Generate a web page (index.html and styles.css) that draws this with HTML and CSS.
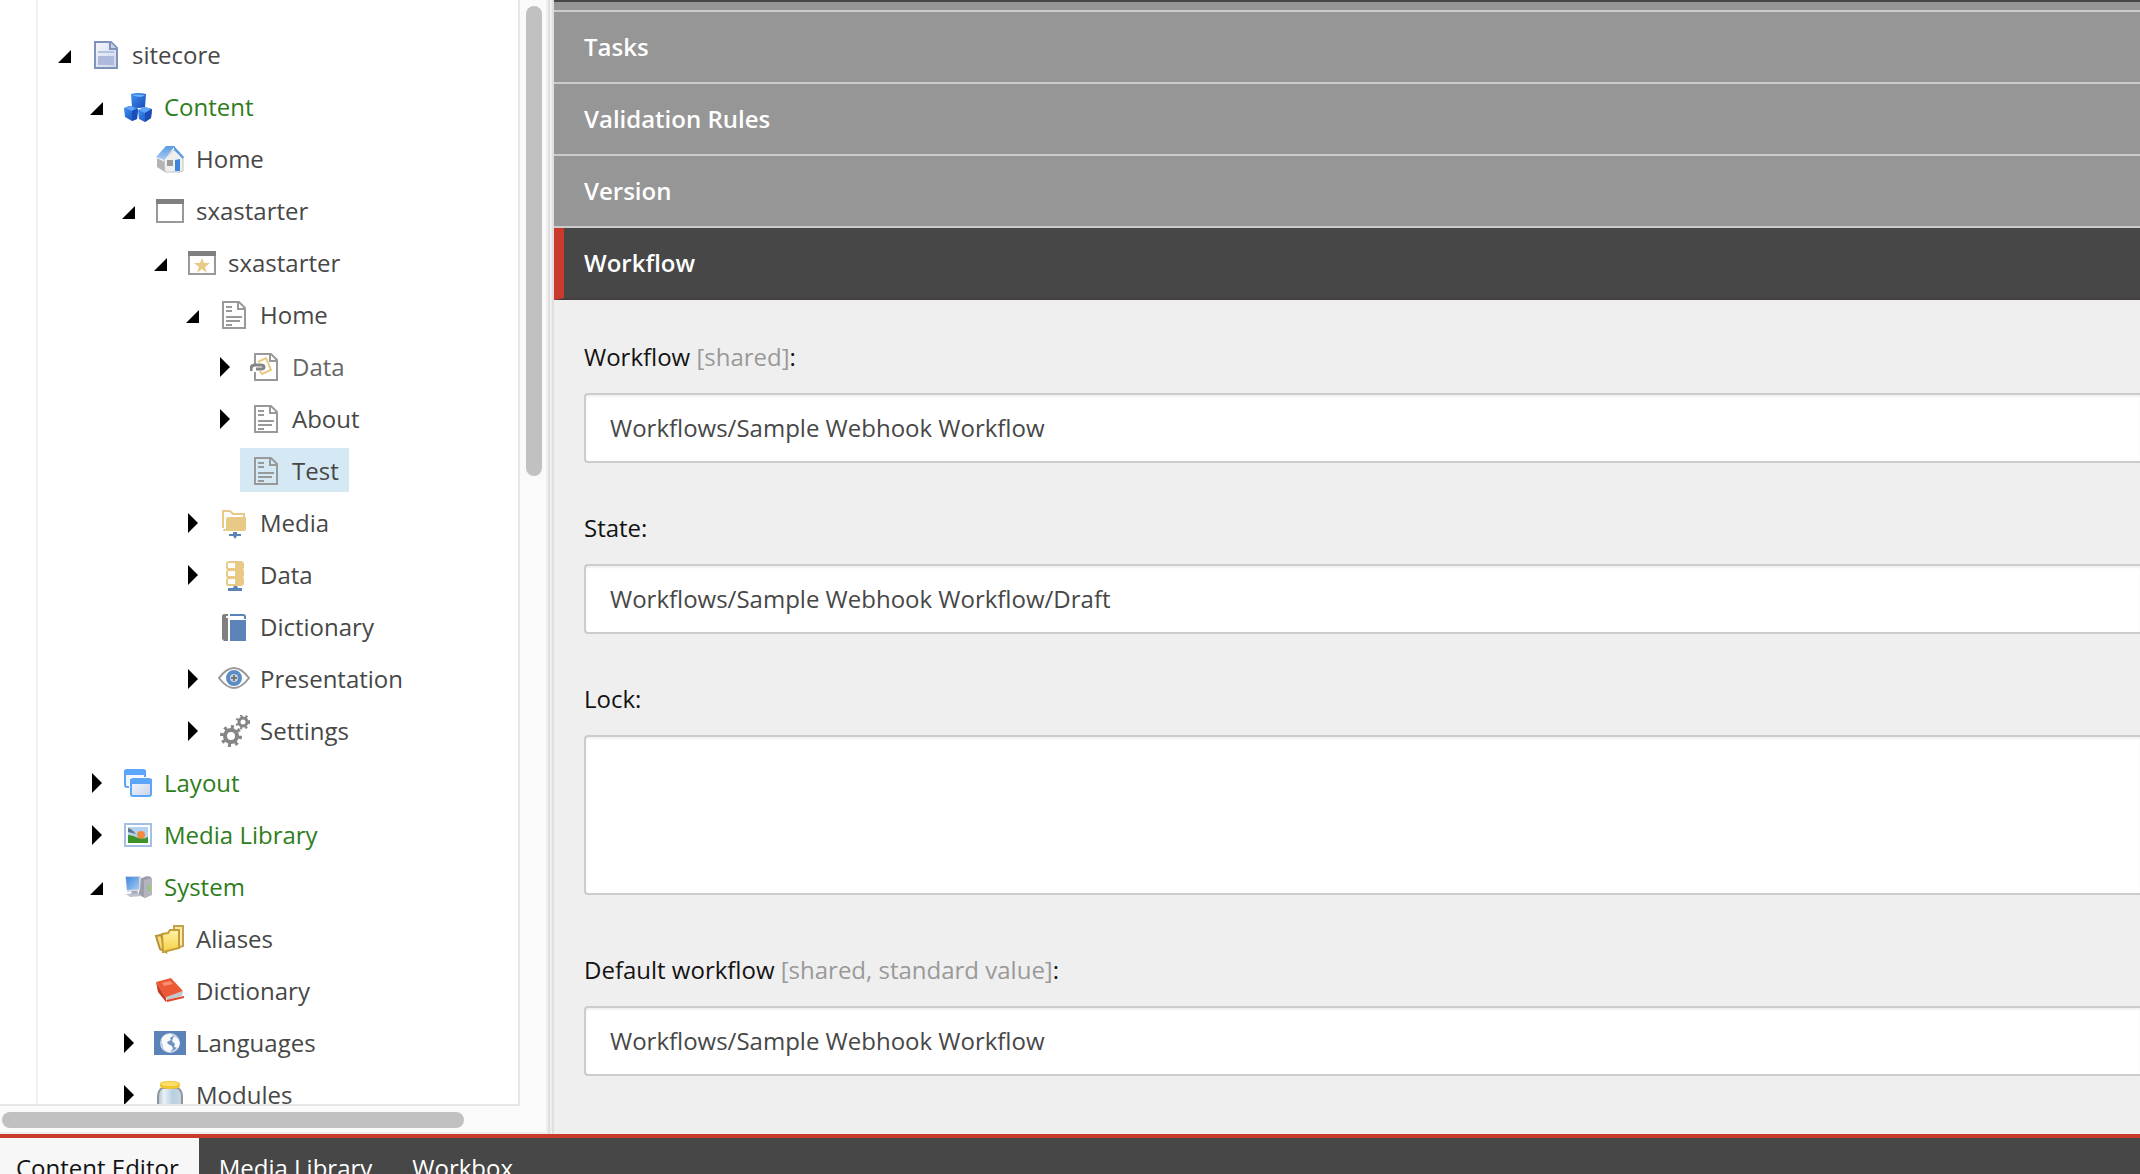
FILE: index.html
```
<!DOCTYPE html>
<html lang="en">
<head>
<meta charset="utf-8">
<title>Content Editor</title>
<link rel="stylesheet" href="styles.css">
</head>
<body>
<svg class="defs" aria-hidden="true">
  <defs>
    <linearGradient id="g-sheet" x1="0" y1="0" x2="1" y2="1"><stop offset="0" stop-color="#f4f7fd"/><stop offset="1" stop-color="#ccd4ea"/></linearGradient>
    <linearGradient id="g-cube" x1="0" y1="0" x2="1" y2="1"><stop offset="0" stop-color="#3f92f6"/><stop offset="1" stop-color="#1a4bb4"/></linearGradient>
    <linearGradient id="g-roof" x1="0" y1="0" x2="0" y2="1"><stop offset="0" stop-color="#5a9be0"/><stop offset="1" stop-color="#a9cdf3"/></linearGradient>
    <linearGradient id="g-folder" x1="0" y1="0" x2="0" y2="1"><stop offset="0" stop-color="#fff3a8"/><stop offset="1" stop-color="#f6cf45"/></linearGradient>
    <linearGradient id="g-screen" x1="0" y1="0" x2="1" y2="1"><stop offset="0" stop-color="#3f86dd"/><stop offset="1" stop-color="#a5cdf5"/></linearGradient>
    <linearGradient id="g-glass" x1="0" y1="0" x2="1" y2="0"><stop offset="0" stop-color="#b4bfc8"/><stop offset=".25" stop-color="#e9f2f9"/><stop offset=".6" stop-color="#b9cfe0"/><stop offset="1" stop-color="#ccd6de"/></linearGradient>
    <symbol id="open" viewBox="0 0 14 14"><path d="M14 1v13H1z"/></symbol>
    <symbol id="closed" viewBox="0 0 12 20"><path d="M2 0l10 10L2 20z"/></symbol>
    <symbol id="root" viewBox="0 0 32 32"><path d="M5 3h16l6 6v20H5z" fill="url(#g-sheet)" stroke="#7f93b8" stroke-width="2"/><path d="M20 3v7h7" fill="#c9d3e8" stroke="#7f93b8" stroke-width="2"/><path d="M8 13h16" stroke="#b3c1e0" stroke-width="2"/><path d="M8 17h16v9H8z" fill="#aebadb"/></symbol>
    <symbol id="cubes" viewBox="0 0 32 32"><path d="M9 3q7-2 15 0l-1 13q-6 2-13 0z" fill="url(#g-cube)"/><path d="M10 4q6-1 13 0l-4 2q-5 0-9-2" fill="#6fb0fb"/><path d="M2 17l5-2 8 1 1 3-1 9-5 2-7-4z" fill="url(#g-cube)"/><path d="M3 17l5-2 6 2-4 3z" fill="#5ea4fa"/><path d="M10 20v10l5-2 1-10z" fill="#1b4db6"/><path d="M16 19l7-3 7 2-1 9-6 4-6-3z" fill="url(#g-cube)"/><path d="M16 19l7-3 6 2-6 4z" fill="#5ea4fa"/><path d="M23 22v9l6-4 1-9z" fill="#1b4db6"/></symbol>
    <symbol id="house" viewBox="0 0 32 32"><path d="M3 15l8 4v10l-8-5z" fill="#b4b4b4"/><path d="M10 16L21 6l8 10v12l-3 1H11z" fill="#efefee" stroke="#c2c2c2"/><path d="M2 14L12 3h9L10 17z" fill="url(#g-roof)"/><path d="M20 3l10 11-1 2-9-9z" fill="#5a9be0"/><path d="M13 17h6v6h-6z" fill="#9b9b9b"/><path d="M21 17l5-1v12h-5z" fill="#3b86dc"/></symbol>
    <symbol id="window" viewBox="0 0 32 32"><path d="M3 5h26v22H3z" fill="#fff" stroke="#999" stroke-width="2"/><path d="M2 4h28v5H2z" fill="#808080"/></symbol>
    <symbol id="site" viewBox="0 0 32 32"><path d="M3 5h26v22H3z" fill="#fff" stroke="#999" stroke-width="2"/><path d="M2 4h28v5H2z" fill="#808080"/><path d="M16 11l2 5h6l-5 4 2 6-5-4-5 4 2-6-5-4h6z" fill="#e8c985"/></symbol>
    <symbol id="page" viewBox="0 0 32 32"><path d="M5 3h16l6 6v20H5z" fill="none" stroke="#999" stroke-width="2"/><path d="M20 3v7h7" fill="none" stroke="#999" stroke-width="2"/><path d="M8 8h6M8 12h6M8 18h16M8 22h14M8 26h6" stroke="#999" stroke-width="2"/></symbol>
    <symbol id="linked" viewBox="0 0 32 32"><path d="M5 3h16l6 6v20H5z" fill="#fff" stroke="#999" stroke-width="2"/><path d="M20 3v7h7" fill="none" stroke="#999" stroke-width="2"/><path d="M8 11l8-4 5 12-9 4-2-3" fill="none" stroke="#e8c985" stroke-width="2"/><path d="M0 14h8v7H0z" fill="#fff"/><path d="M1 20v-2q0-4 4-4h6q3 0 3 2t-3 2H6" fill="none" stroke="#858585" stroke-width="3"/></symbol>
    <symbol id="media" viewBox="0 0 32 32"><path d="M5 21V4h7l3 3h11v4" fill="none" stroke="#e8c985" stroke-width="2"/><path d="M10 10h17q1 0 1 1v11q0 2-2 2H6q-1 0-1-2h3V12q0-2 2-2" fill="#e8c985"/><path d="M15 25h4v2h4v2h-4l-2 3-2-3h-4v-2h4z" fill="#5b83b8"/></symbol>
    <symbol id="data" viewBox="0 0 32 32"><path d="M10 2h14l2 2v5l-1 1 1 2v5l-1 1 1 2v5l-2 2H9l-1-2v-4l1-2-1-2v-4l1-2-1-2V4z" fill="#e8c985"/><path d="M10 4h7v5h-7zM10 12h7v5h-7zM10 20h7v5h-7z" fill="#fff"/><path d="M16 27h3l1 2h4v3H10v-3h5z" fill="#5b83b8"/></symbol>
    <symbol id="book" viewBox="0 0 32 32"><path d="M4 5q0-2 3-2h3v2H8v2h2v23H6l-2-2z" fill="#808080"/><path d="M12 9h16v21H12z" fill="#5b83b8"/><path d="M12 4h13q2 0 2 2v2" fill="none" stroke="#5b83b8" stroke-width="2"/></symbol>
    <symbol id="eye" viewBox="0 0 32 32"><path d="M1 15Q16-5 31 15 16 35 1 15z" fill="#fff" stroke="#999" stroke-width="2"/><circle cx="16" cy="15" r="6" fill="#c9d4e2" stroke="#5b8cc8" stroke-width="4"/><path d="M16 12v6M13 15h6" stroke="#777" stroke-width="2"/></symbol>
    <symbol id="gears" viewBox="0 0 32 32"><circle cx="13" cy="21" r="9" fill="none" stroke="#858585" stroke-width="4" stroke-dasharray="3 4"/><circle cx="13" cy="21" r="6" fill="#fff" stroke="#858585" stroke-width="4"/><circle cx="25" cy="7" r="6" fill="none" stroke="#858585" stroke-width="3" stroke-dasharray="2 3"/><circle cx="25" cy="7" r="4" fill="#fff" stroke="#858585" stroke-width="3"/></symbol>
    <symbol id="layout" viewBox="0 0 32 32"><rect x="3" y="3" width="20" height="17" rx="2" fill="#f5f5fd" stroke="#5ba6fb" stroke-width="2"/><path d="M2 3h22v5H2z" fill="#5ba6fb"/><rect x="7" y="10" width="23" height="21" rx="2" fill="#fff"/><rect x="9" y="12" width="20" height="17" rx="2" fill="url(#g-sheet)" stroke="#5ba6fb" stroke-width="2"/><path d="M8 12h22v5H8z" fill="#5ba6fb"/></symbol>
    <symbol id="picture" viewBox="0 0 32 32"><path d="M3 5h26v22H3z" fill="#fff" stroke="#a3bfe6" stroke-width="2"/><path d="M6 8h20v16H6z" fill="#b4d2ee"/><path d="M6 9q4 1 8 6l-8-2z" fill="#60788a"/><circle cx="19" cy="16" r="4" fill="#f28a3e"/><path d="M6 16q5 0 10 3 5 2 10-1v6H6z" fill="#3f9228"/></symbol>
    <symbol id="computer" viewBox="0 0 32 32"><path d="M17 8l8-3 4 1v18l-6 3-6-3z" fill="#9c9da8"/><path d="M22 9l8-2v17l-8 3z" fill="#b3b4bd"/><path d="M27 14v6" stroke="#86d45e" stroke-width="2"/><path d="M3 5h16l-1 15-13 1z" fill="#d5d8e4"/><path d="M4 6h13v12l-12 1z" fill="url(#g-screen)"/><path d="M10 20h5l2 3h-8z" fill="#a6a7b4"/><path d="M4 23l12-1 4 3-12 1z" fill="#bfc0cd"/></symbol>
    <symbol id="folders" viewBox="0 0 32 32"><path d="M2 13l5-1 5 17-6-3z" fill="#f7df80" stroke="#b8903a" stroke-width="2"/><path d="M20 7V3h9v20l-6 2z" fill="#faeaa9" stroke="#c4a04a" stroke-width="2"/><path d="M8 11l6-1 2-3h9v18L9 29z" fill="url(#g-folder)" stroke="#c49d38" stroke-width="2"/></symbol>
    <symbol id="redbook" viewBox="0 0 32 32"><path d="M2 7l15-4 12 13-17 7z" fill="#ec5934"/><path d="M2 7l10 16v4L4 17z" fill="#c43c22"/><path d="M12 22l17-6-1 5-15 4z" fill="#c2c8cc"/><path d="M12 25l18-4v2l-17 4z" fill="#df4828"/><path d="M8 8l8-2 3 3-9 2z" fill="#f79070"/></symbol>
    <symbol id="globe" viewBox="0 0 32 32"><path d="M0 4h32v24H0z" fill="#5b83b8"/><circle cx="16" cy="16" r="9" fill="#6f92c0" stroke="#c9d7e9" stroke-width="2"/><path d="M8 11q3-4 9-4l2 2-3 2 1 2-4 2 1 2 4 2 1 3-4 3q-5-1-6-5l-1-4zM20 9l4 3 2 4-2 5-4-1 1-3-3-3 1-3z" fill="#f8fafc"/></symbol>
    <symbol id="jar" viewBox="0 0 32 32"><path d="M8 9h16q4 3 4 8v15H4V17q0-5 4-8z" fill="url(#g-glass)" stroke="#8c969d" stroke-width="2"/><path d="M6 5q0-3 10-3t10 3v2q0 3-10 3T6 7z" fill="#f3c62f"/><ellipse cx="16" cy="5" rx="9" ry="2" fill="#fbe06c"/></symbol>
  </defs>
</svg>
<div class="app">
  <div class="workspace">
    <nav class="sidebar" aria-label="Content tree">
      <div class="viewport">
        <div class="gutter"></div>
        <ul class="tree">
          <li class="row l0"><button class="toggle" aria-label="Collapse"><svg class="open"><use href="#open"/></svg></button><a class="node" href="#"><svg class="icon"><use href="#root"/></svg>sitecore</a></li>
          <li class="row l1"><button class="toggle" aria-label="Collapse"><svg class="open"><use href="#open"/></svg></button><a class="node green" href="#"><svg class="icon"><use href="#cubes"/></svg>Content</a></li>
          <li class="row l2"><span class="toggle"></span><a class="node" href="#"><svg class="icon"><use href="#house"/></svg>Home</a></li>
          <li class="row l2"><button class="toggle" aria-label="Collapse"><svg class="open"><use href="#open"/></svg></button><a class="node" href="#"><svg class="icon"><use href="#window"/></svg>sxastarter</a></li>
          <li class="row l3"><button class="toggle" aria-label="Collapse"><svg class="open"><use href="#open"/></svg></button><a class="node" href="#"><svg class="icon"><use href="#site"/></svg>sxastarter</a></li>
          <li class="row l4"><button class="toggle" aria-label="Collapse"><svg class="open"><use href="#open"/></svg></button><a class="node" href="#"><svg class="icon"><use href="#page"/></svg>Home</a></li>
          <li class="row l5"><button class="toggle" aria-label="Expand"><svg class="closed"><use href="#closed"/></svg></button><a class="node dim" href="#"><svg class="icon"><use href="#linked"/></svg>Data</a></li>
          <li class="row l5"><button class="toggle" aria-label="Expand"><svg class="closed"><use href="#closed"/></svg></button><a class="node" href="#"><svg class="icon"><use href="#page"/></svg>About</a></li>
          <li class="row l5"><span class="toggle"></span><a class="node selected" href="#"><svg class="icon"><use href="#page"/></svg>Test</a></li>
          <li class="row l4"><button class="toggle" aria-label="Expand"><svg class="closed"><use href="#closed"/></svg></button><a class="node" href="#"><svg class="icon"><use href="#media"/></svg>Media</a></li>
          <li class="row l4"><button class="toggle" aria-label="Expand"><svg class="closed"><use href="#closed"/></svg></button><a class="node" href="#"><svg class="icon"><use href="#data"/></svg>Data</a></li>
          <li class="row l4"><span class="toggle"></span><a class="node" href="#"><svg class="icon"><use href="#book"/></svg>Dictionary</a></li>
          <li class="row l4"><button class="toggle" aria-label="Expand"><svg class="closed"><use href="#closed"/></svg></button><a class="node" href="#"><svg class="icon"><use href="#eye"/></svg>Presentation</a></li>
          <li class="row l4"><button class="toggle" aria-label="Expand"><svg class="closed"><use href="#closed"/></svg></button><a class="node" href="#"><svg class="icon"><use href="#gears"/></svg>Settings</a></li>
          <li class="row l1"><button class="toggle" aria-label="Expand"><svg class="closed"><use href="#closed"/></svg></button><a class="node green" href="#"><svg class="icon"><use href="#layout"/></svg>Layout</a></li>
          <li class="row l1"><button class="toggle" aria-label="Expand"><svg class="closed"><use href="#closed"/></svg></button><a class="node green" href="#"><svg class="icon"><use href="#picture"/></svg>Media Library</a></li>
          <li class="row l1"><button class="toggle" aria-label="Collapse"><svg class="open"><use href="#open"/></svg></button><a class="node green" href="#"><svg class="icon"><use href="#computer"/></svg>System</a></li>
          <li class="row l2"><span class="toggle"></span><a class="node" href="#"><svg class="icon"><use href="#folders"/></svg>Aliases</a></li>
          <li class="row l2"><span class="toggle"></span><a class="node" href="#"><svg class="icon"><use href="#redbook"/></svg>Dictionary</a></li>
          <li class="row l2"><button class="toggle" aria-label="Expand"><svg class="closed"><use href="#closed"/></svg></button><a class="node" href="#"><svg class="icon"><use href="#globe"/></svg>Languages</a></li>
          <li class="row l2"><button class="toggle" aria-label="Expand"><svg class="closed"><use href="#closed"/></svg></button><a class="node" href="#"><svg class="icon"><use href="#jar"/></svg>Modules</a></li>
        </ul>
      </div>
      <div class="track-y"><div class="thumb-y"></div></div>
      <div class="track-x"><div class="thumb-x"></div></div>
    </nav>
    <div class="splitter"></div>
    <main class="editor">
      <div class="bar previous"></div>
      <button class="bar">Tasks</button>
      <button class="bar">Validation Rules</button>
      <button class="bar">Version</button>
      <button class="bar active" aria-expanded="true">Workflow</button>
      <form class="fields">
        <div class="field">
          <label for="workflow">Workflow <span class="note">[shared]</span>:</label>
          <input id="workflow" type="text" value="Workflows/Sample Webhook Workflow">
        </div>
        <div class="field">
          <label for="state">State:</label>
          <input id="state" type="text" value="Workflows/Sample Webhook Workflow/Draft">
        </div>
        <div class="field tall">
          <label for="lock">Lock:</label>
          <textarea id="lock"></textarea>
        </div>
        <div class="field">
          <label for="default">Default workflow <span class="note">[shared, standard value]</span>:</label>
          <input id="default" type="text" value="Workflows/Sample Webhook Workflow">
        </div>
      </form>
    </main>
  </div>
  <nav class="taskbar" aria-label="Applications">
    <a class="tab current" href="#">Content Editor</a>
    <a class="tab" href="#">Media Library</a>
    <a class="tab" href="#">Workbox</a>
  </nav>
</div>
</body>
</html>
```

FILE: styles.css
```
* {
  box-sizing: border-box;
}

body {
  margin: 0;
  background: #fff;
  color: #474747;
  font: 24px/32px "Open Sans", "Noto Sans", sans-serif;
}

button,
input,
textarea {
  font: inherit;
  color: inherit;
}

a {
  color: inherit;
  text-decoration: none;
}

.defs {
  position: absolute;
  width: 0;
  height: 0;
}

.app {
  display: grid;
  grid-template-rows: minmax(0, 1fr) 40px;
  height: 100vh;
  overflow: hidden;
}

.workspace {
  display: grid;
  grid-template-columns: 546px 8px minmax(0, 1fr);
  min-height: 0;
}

/* Content tree */

.sidebar {
  display: grid;
  grid-template: minmax(0, 1fr) 28px / minmax(0, 1fr) 26px;
  min-height: 0;
  background: #fafafa;
}

.viewport {
  display: grid;
  grid-template-columns: 38px 1fr;
  overflow: hidden;
  background: #fff;
  border-right: 2px solid #e6e6e6;
  border-bottom: 2px solid #e6e6e6;
}

.gutter {
  border-right: 2px solid #f0f0f0;
}

.tree {
  margin: 0;
  padding: 28px 0 0 16px;
  list-style: none;
}

.row {
  display: flex;
  align-items: center;
  height: 52px;
}

.l1 { padding-left: 32px; }
.l2 { padding-left: 64px; }
.l3 { padding-left: 96px; }
.l4 { padding-left: 128px; }
.l5 { padding-left: 160px; }

.toggle {
  display: flex;
  align-items: center;
  justify-content: center;
  width: 26px;
  height: 32px;
  padding: 0 6px 0 0;
  border: 0;
  background: none;
  color: #000;
}

.open,
.closed {
  fill: currentColor;
}

.open {
  width: 14px;
  height: 14px;
  margin-top: 4px;
}

.closed {
  width: 12px;
  height: 20px;
  margin-top: 2px;
}

.node {
  display: flex;
  align-items: center;
  gap: 10px;
  height: 44px;
  padding: 2px 10px 0;
  white-space: nowrap;
}

.icon {
  width: 32px;
  height: 32px;
}

.green {
  color: #2f7d1b;
}

.dim {
  color: #666;
}

.selected {
  background: #d5e9f4;
}

.track-y {
  padding: 6px;
}

.thumb-y {
  width: 16px;
  height: 43%;
  border-radius: 8px;
  background: #c1c1c1;
}

.track-x {
  grid-column: 1 / -1;
  padding: 6px 2px;
  border-bottom: 2px solid #ececec;
}

.thumb-x {
  width: 462px;
  height: 16px;
  border-radius: 8px;
  background: #c1c1c1;
}

.splitter {
  border-right: 2px solid #dfdfdf;
  border-left: 2px solid #eee;
  background: linear-gradient(90deg, #e0e0e0 2px, #eee 2px);
}

/* Field editor */

.editor {
  min-height: 0;
  overflow: hidden;
  background: #efefef;
}

.bar {
  display: block;
  width: 100%;
  height: 72px;
  padding: 0 0 0 30px;
  border: 0;
  border-bottom: 2px solid #ccc;
  background: #969696;
  color: #fff;
  font-weight: 600;
  text-align: left;
}

.previous {
  height: 12px;
  border-top: 2px solid #474747;
}

.active {
  padding-left: 20px;
  border-bottom-color: #453f43;
  border-left: 10px solid #ca3a2c;
  background: #474747;
}

.fields {
  display: grid;
  gap: 49px;
  padding: 41px 0 0 30px;
}

.field {
  display: grid;
  gap: 20px;
  color: #131313;
}

.tall {
  margin-bottom: 10px;
}

.note {
  color: #999;
}

.field input,
.field textarea {
  display: block;
  width: 100%;
  height: 70px;
  margin: 0;
  padding: 0 24px 2px;
  border: 2px solid #ccc;
  border-right: 0;
  border-radius: 4px 0 0 4px;
  outline: 0;
  background: #fff;
  box-shadow: inset 0 2px 2px rgba(0, 0, 0, .06);
  color: #474747;
}

.field textarea {
  height: 160px;
  resize: none;
}

/* Application tabs */

.taskbar {
  display: flex;
  align-items: flex-start;
  border-top: 4px solid #ca3a2c;
  background: #474747;
  color: #fff;
}

.tab {
  padding: 14px 20px;
}

.current {
  padding: 14px 20px 14px 16px;
  background: #f7f7f7;
  color: #131313;
}
```
